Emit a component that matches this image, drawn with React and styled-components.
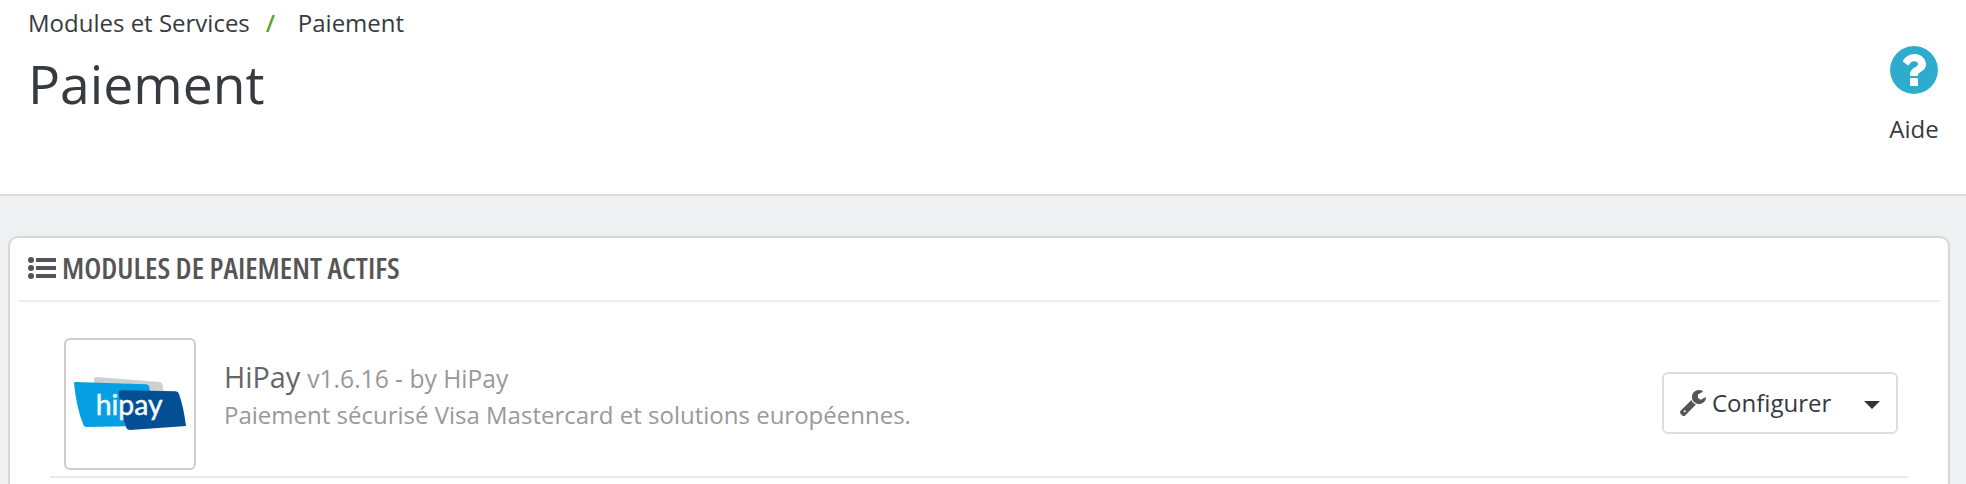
import React from "react";
import styled, { createGlobalStyle } from "styled-components";

const GlobalStyle = createGlobalStyle`
  *, *::before, *::after { box-sizing: border-box; }
  body {
    margin: 0;
    background: #eef0f2;
    color: #363a41;
    font-family: "Open Sans", "Noto Sans", sans-serif;
    font-size: 24px;
    line-height: 32px;
  }
`;

const Page = styled.div`
  height: 484px;
  overflow: hidden;
  background: #eef0f2;
`;

const Header = styled.header`
  display: flex;
  justify-content: space-between;
  height: 196px;
  padding: 0 28px;
  background: #fff;
  border-bottom: 2px solid #ddd;
`;

const Breadcrumb = styled.nav`
  display: flex;
  padding-top: 7px;
  white-space: nowrap;
`;

const Separator = styled.span`
  width: 48px;
  padding-left: 16px;
  color: #61a42a;
  font-weight: 600;
`;

const Title = styled.h1`
  margin: 9px 0 0;
  font-size: 53.4px;
  font-weight: 400;
  line-height: 72px;
`;

const HelpLink = styled.a`
  display: flex;
  flex-direction: column;
  align-items: center;
  width: 48px;
  padding-top: 46px;
`;

const HelpLabel = styled.span`
  margin-top: 19px;
`;

const Panel = styled.section`
  height: 300px;
  margin: 40px 16px 0 8px;
  padding: 0 8px;
  background: #fff;
  border: 2px solid #d3d8db;
  border-radius: 10px;
`;

const PanelHeading = styled.h2`
  display: flex;
  align-items: center;
  height: 64px;
  margin: 0;
  padding: 0 10px 3px;
  border-bottom: 2px solid #eee;
  color: #555;
  font-size: 28px;
  font-weight: 400;
`;

const PanelTitle = styled.span`
  margin-left: 6px;
  font-family: "Open Sans", sans-serif;
  font-stretch: 75%;
  font-weight: 550;
  transform: scaleX(1.07);
  transform-origin: left;
  white-space: nowrap;
`;

const ModuleRow = styled.article`
  display: flex;
  align-items: center;
  height: 176px;
  margin: 0 32px;
  padding: 26px 10px 0 14px;
  border-bottom: 2px solid #e6ebee;
`;

const LogoFrame = styled.div`
  display: flex;
  flex: none;
  justify-content: center;
  width: 132px;
  height: 132px;
  margin-top: 4px;
  padding-top: 35px;
  border: 2px solid #ccc;
  border-radius: 6px;
`;

const ModuleInfo = styled.div`
  flex: 1;
  margin: 0 0 12px 28px;
  color: #999;
  white-space: nowrap;
`;

const ModuleLine = styled.p`
  margin: 0;
  font-size: ${(p) => (p.$heading ? "24.6px" : "24px")};
  line-height: 36px;
`;

const ModuleName = styled.span`
  margin-right: 7px;
  color: #666;
  font-size: 28.8px;
`;

const ButtonGroup = styled.div`
  display: flex;
  width: 236px;
  height: 62px;
  margin-top: 2px;
  border: 2px solid #ddd;
  border-radius: 6px;
`;

const Button = styled.button`
  display: flex;
  align-items: center;
  padding: ${(p) => (p.$toggle ? "4px 0 0 17px" : "0 16px")};
  border: 0;
  background: none;
  color: #363a41;
  font: inherit;
`;

const ButtonLabel = styled.span`
  margin-left: 6px;
`;

const Caret = styled.span`
  border: 8px solid transparent;
  border-top-color: #333;
  border-bottom: 0;
`;

const HelpIcon = () => (
  <svg width="48" height="48" viewBox="128 128 1536 1536" fill="#2eacce">
    <path d="M1024 1376v-192q0-14-9-23t-23-9h-192q-14 0-23 9t-9 23v192q0 14 9 23t23 9h192q14 0 23-9t9-23zm256-672q0-88-55.5-163t-138.5-116-170-41q-243 0-371 213-15 24 8 42l132 100q7 6 19 6 16 0 25-12 53-68 86-92 34-24 86-24 48 0 85.5 26t37.5 59q0 38-20 61t-68 45q-63 28-115.5 86.5t-52.5 125.5v36q0 14 9 23t23 9h192q14 0 23-9t9-23q0-19 21.5-49.5t54.5-49.5q32-18 49-28.5t46-35 44.5-48 28-60.5 12.5-81zm384 192q0 209-103 385.5t-279.5 279.5-385.5 103-385.5-103-279.5-279.5-103-385.5 103-385.5 279.5-279.5 385.5-103 385.5 103 279.5 279.5 103 385.5z" />
  </svg>
);

const ListIcon = () => (
  <svg width="28" height="22" viewBox="0 0 28 22" fill="#555">
    {[3, 11, 19].map((y) => (
      <g key={y}>
        <circle cx="3" cy={y} r="3" />
        <rect x="8" y={y - 2} width="20" height="4" rx="0.5" />
      </g>
    ))}
  </svg>
);

const WrenchIcon = () => (
  <svg width="26" height="26" viewBox="85 128 1641 1643" fill="#555">
    <path d="M448 1472q0-26-19-45t-45-19-45 19-19 45 19 45 45 19 45-19 19-45zm644-420l-682 682q-37 37-90 37-52 0-91-37l-106-108q-38-36-38-90 0-53 38-91l681-681q39 98 114.5 173.5t173.5 114.5zm634-435q0 39-23 106-47 134-164.5 217.5t-258.5 83.5q-185 0-316.5-131.5t-131.5-316.5 131.5-316.5 316.5-131.5q58 0 121.5 16.5t107.5 46.5q16 11 16 28t-16 28l-293 169v224l193 107q5-3 79-48.5t135.5-81 70.5-35.5q15 0 23.5 10t8.5 25z" />
  </svg>
);

const HipayLogo = () => (
  <svg width="112" height="57" viewBox="0 0 336 171">
    <path d="M60 12Q61 5 68 6L256 21Q264 22 266 29L269 55H60Z" fill="#cfd0d2" />
    <path d="M0 24Q0 21 5 21L216 28Q224 29 226 36L238 152L38 156Q31 156 28 149Q7 98 0 24Z" fill="#069fe3" />
    <path d="M134 52Q134 46 142 46L305 49Q313 50 315 57Q328 92 336 153L169 165Q160 166 157 158Q141 118 134 52Z" fill="#044f94" />
    <text x="65" y="120" fill="#f3f9fd" fontFamily="Lato, sans-serif" fontSize="88" fontWeight="400" stroke="#f3f9fd" strokeWidth="1.5" textLength="201" lengthAdjust="spacingAndGlyphs">hipay</text>
  </svg>
);

export default function App() {
  return (
    <Page>
      <GlobalStyle />
      <Header>
        <div>
          <Breadcrumb>
            <span>Modules et Services</span>
            <Separator>/</Separator>
            <span>Paiement</span>
          </Breadcrumb>
          <Title>Paiement</Title>
        </div>
        <HelpLink>
          <HelpIcon />
          <HelpLabel>Aide</HelpLabel>
        </HelpLink>
      </Header>
      <Panel>
        <PanelHeading>
          <ListIcon />
          <PanelTitle>MODULES DE PAIEMENT ACTIFS</PanelTitle>
        </PanelHeading>
        <ModuleRow>
          <LogoFrame>
            <HipayLogo />
          </LogoFrame>
          <ModuleInfo>
            <ModuleLine $heading>
              <ModuleName>HiPay</ModuleName>
              v1.6.16 - by HiPay
            </ModuleLine>
            <ModuleLine>Paiement sécurisé Visa Mastercard et solutions européennes.</ModuleLine>
          </ModuleInfo>
          <ButtonGroup>
            <Button>
              <WrenchIcon />
              <ButtonLabel>Configurer</ButtonLabel>
            </Button>
            <Button $toggle aria-label="Plus">
              <Caret />
            </Button>
          </ButtonGroup>
        </ModuleRow>
      </Panel>
    </Page>
  );
}
